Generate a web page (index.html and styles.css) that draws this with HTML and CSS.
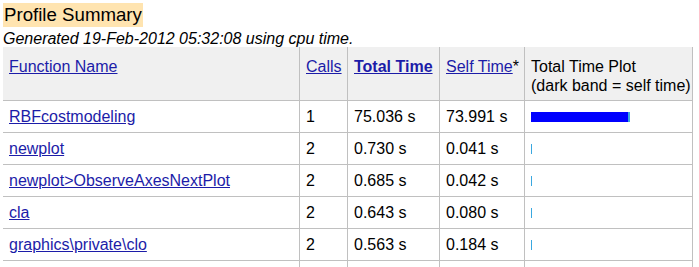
FILE: index.html
```html
<!DOCTYPE html>
<html>
<head>
<meta charset="utf-8">
<link rel="stylesheet" href="styles.css">
</head>
<body>
<div class="title"><span class="hl">Profile Summary</span></div>
<div class="gen">Generated 19-Feb-2012 05:32:08 using cpu time.</div>
<table class="prof">
  <thead>
    <tr>
      <th class="c-name"><a href="#">Function Name</a></th>
      <th class="c-calls"><a href="#">Calls</a></th>
      <th class="c-total"><a href="#" class="sorted">Total Time</a></th>
      <th class="c-self"><a href="#">Self Time</a>*</th>
      <th class="c-plot">Total Time Plot<br>(dark band = self time)</th>
    </tr>
  </thead>
  <tbody>
    <tr>
      <td><a href="#">RBFcostmodeling</a></td>
      <td>1</td>
      <td>75.036 s</td>
      <td>73.991 s</td>
      <td><span class="bar self" style="width:97px"></span><span class="bar rest" style="width:2px"></span></td>
    </tr>
    <tr>
      <td><a href="#">newplot</a></td>
      <td>2</td>
      <td>0.730 s</td>
      <td>0.041 s</td>
      <td><span class="bar rest" style="width:1px"></span></td>
    </tr>
    <tr>
      <td><a href="#">newplot&gt;ObserveAxesNextPlot</a></td>
      <td>2</td>
      <td>0.685 s</td>
      <td>0.042 s</td>
      <td><span class="bar rest" style="width:1px"></span></td>
    </tr>
    <tr>
      <td><a href="#">cla</a></td>
      <td>2</td>
      <td>0.643 s</td>
      <td>0.080 s</td>
      <td><span class="bar rest" style="width:1px"></span></td>
    </tr>
    <tr>
      <td><a href="#">graphics\private\clo</a></td>
      <td>2</td>
      <td>0.563 s</td>
      <td>0.184 s</td>
      <td><span class="bar rest" style="width:1px"></span></td>
    </tr>
    <tr>
      <td>&nbsp;</td>
      <td>&nbsp;</td>
      <td>&nbsp;</td>
      <td>&nbsp;</td>
      <td>&nbsp;</td>
    </tr>
  </tbody>
</table>
</body>
</html>
```
FILE: styles.css
```css
html, body {
  margin: 0;
  padding: 0;
  background: #ffffff;
}
body {
  padding: 3px 0 0 3px;
  font-family: "Liberation Sans", Arial, sans-serif;
  font-size: 16px;
  color: #000000;
}
.title {
  line-height: 24px;
  height: 26px;
}
.hl {
  font-size: 18.67px;
  background: #ffe4b0;
  color: #000;
  padding: 1px 1px 2px 1px;
}
.gen {
  font-style: italic;
  line-height: 19px;
  height: 18px;
}
.prof {
  border-collapse: separate;
  border-spacing: 0;
  table-layout: fixed;
  width: 690px;
}
.prof th, .prof td {
  box-sizing: border-box;
  border-right: 1px solid #c0c0c0;
  border-bottom: 1px solid #c0c0c0;
  padding: 6px;
  line-height: 19px;
  text-align: left;
  vertical-align: top;
  font-weight: normal;
  white-space: nowrap;
}
.prof th {
  background: #f0f0f0;
  padding: 10px 6px 5px 6px;
}
.c-name { width: 297px; }
.c-calls { width: 48px; }
.c-total { width: 92px; }
.c-self { width: 85px; }
.c-plot { width: 168px; }
.prof a {
  color: #1c1ca8;
  text-decoration: underline;
}
.prof a.sorted {
  font-weight: bold;
}
.bar {
  display: inline-block;
  height: 10px;
  vertical-align: baseline;
}
.bar.self { background: #0000ff; }
.bar.rest { background: #3aa8e0; }
```
